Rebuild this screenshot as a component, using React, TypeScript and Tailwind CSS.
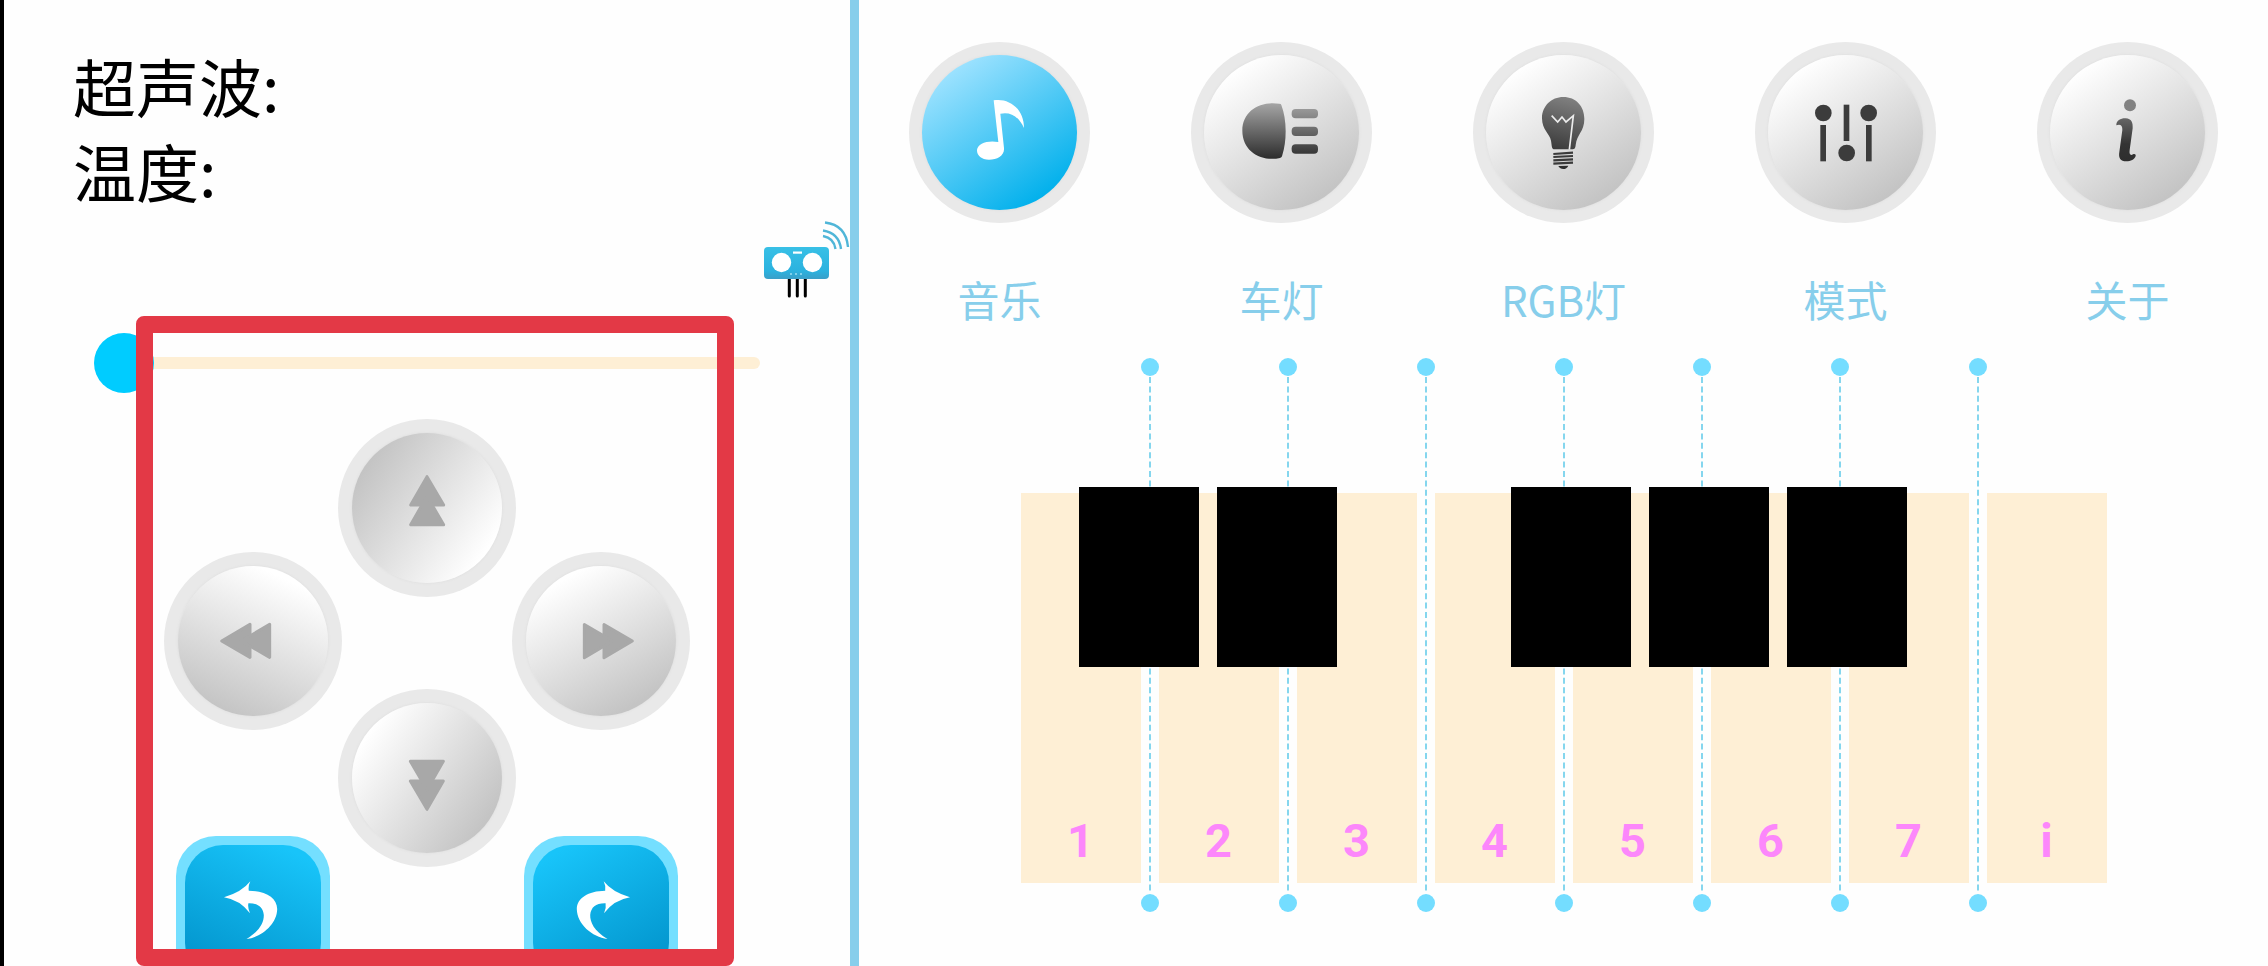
import { useState } from "react";
import type { ReactNode } from "react";

type Tab = { label: string; icon: ReactNode };

const tabs: Tab[] = [
  {
    label: "音乐",
    icon: (
      <svg viewBox="57 66 543 543" className="size-full" fill="#fff" aria-hidden="true">
        <path d="M311 241C352 233 402 262 402 324C386 290 362 274 331 281L342 384C344 406 322 419 297 419C274 419 260 405 261 390C263 371 292 360 325 366Z" />
      </svg>
    ),
  },
  {
    label: "车灯",
    icon: (
      <svg viewBox="906 66 543 543" className="size-full" aria-hidden="true">
        <defs>
          <linearGradient id="lamp" gradientUnits="userSpaceOnUse" x1="0" y1="249" x2="0" y2="417">
            <stop offset="0" stopColor="#a6a6a6" />
            <stop offset="1" stopColor="#2c2c2c" />
          </linearGradient>
        </defs>
        <g fill="url(#lamp)">
          <path d="M1171 251Q1176 251 1177 255Q1190 290 1190 334Q1190 375 1179 409Q1178 413 1173 414C1118 426 1060 395 1060 332C1060 272 1114 242 1171 251Z" />
          <rect x="1208" y="267" width="79" height="28" rx="12" />
          <rect x="1208" y="320" width="79" height="28" rx="12" />
          <rect x="1208" y="373" width="79" height="28" rx="12" />
        </g>
      </svg>
    ),
  },
  {
    label: "RGB灯",
    icon: (
      <svg viewBox="63 66 543 543" className="size-full" aria-hidden="true">
        <defs>
          <linearGradient id="bulb" x1="0.6" y1="0" x2="0.4" y2="1">
            <stop offset="0" stopColor="#808080" />
            <stop offset="1" stopColor="#3c3c3c" />
          </linearGradient>
        </defs>
        <path
          fill="url(#bulb)"
          d="M334 231C372 231 397 258 397 297C397 335 375 342 371 375C370 385 368 388 360 388H308C298 388 300 378 297 362C294 342 270 330 270 295C270 258 298 231 334 231Z"
        />
        <path d="M299 287L317 306L330 291L342 306L364 287L352 389" fill="none" stroke="#ececec" strokeWidth="5" />
        <path d="M304 402L363 398M304 411L363 408M304 421L363 418M304 431L363 428" stroke="#3a3a3a" strokeWidth="6.500" />
        <path d="M319 438L349 437Q344 447 334 447Q324 447 319 438Z" fill="#2c2c2c" />
      </svg>
    ),
  },
  {
    label: "模式",
    icon: (
      <svg viewBox="921 66 543 543" className="size-full" fill="#3c3c3c" aria-hidden="true">
        <circle cx="1126" cy="279" r="25" />
        <rect x="1117" y="315" width="17" height="109" />
        <rect x="1187" y="254" width="17" height="109" />
        <circle cx="1196" cy="399" r="25" />
        <circle cx="1262" cy="279" r="25" />
        <rect x="1254" y="315" width="17" height="109" />
      </svg>
    ),
  },
  {
    label: "关于",
    icon: (
      <svg viewBox="264 66 543 543" className="size-full" aria-hidden="true">
        <defs>
          <linearGradient id="info" x1="0" y1="0" x2="0" y2="1">
            <stop offset="0" stopColor="#666" />
            <stop offset="0.6" stopColor="#333" />
            <stop offset="1" stopColor="#2e2e2e" />
          </linearGradient>
        </defs>
        <circle cx="543" cy="256" r="18" fill="#828282" />
        <path
          fill="url(#info)"
          d="M502 316C501 302 517 294 530 295C548 296 552 308 551 325L542 390C540 404 545 407 552 403C557 400 561 403 560 408C557 418 545 424 532 424C514 424 508 414 511 396L520 330C521 316 513 311 502 316Z"
        />
      </svg>
    ),
  },
];

const notes = ["1", "2", "3", "4", "5", "6", "7", "i"];

// Black key that sits on the string to the right of each white key.
const sharps: (string | null)[] = ["-left-[62px]", "-left-[62px]", null, "-left-[44px]", "-left-[44px]", "-left-[44px]", null];

function PadButton({ name, face, turn }: { name: string; face: string; turn: string }) {
  return (
    <button type="button" aria-label={name} className="size-[178px] shrink-0 rounded-full bg-[#e9e9e9] p-[14px]">
      <span className={`block size-full rounded-full shadow-[0_0_3px_#dcdcdc] ${face}`}>
        <svg viewBox="42 42 450 450" className={`size-full ${turn}`} fill="#a8a8a8" stroke="#a8a8a8" strokeWidth="9" strokeLinejoin="round" aria-hidden="true">
          <path d="M267 173L218 258H317Z" />
          <path d="M267 232L218 317H317Z" />
        </svg>
      </span>
    </button>
  );
}

function TurnButton({ name, face, flip }: { name: string; face: string; flip: string }) {
  return (
    <button type="button" aria-label={name} className="size-[154px] shrink-0 rounded-[40px] bg-[#74dfff] p-[9px]">
      <span className={`block size-full rounded-[38px] ${face}`}>
        <svg viewBox="9 9 136 136" className={`size-full ${flip}`} fill="#fff" aria-hidden="true">
          <path d="M48 61.300Q66 56 74.300 45.300Q72 50 72.800 54.700C90 55 101 62 101.200 73C101 88 86 101 70.500 103C84 95 88 86 87.800 79C87 71 82 67 72.400 67.300Q71.500 72 74 77.300Q64 64 48 61.300Z" />
        </svg>
      </span>
    </button>
  );
}

function SensorIcon() {
  return (
    <svg viewBox="760 217 90 82" className="h-[82px] w-[90px] shrink-0 self-end" role="img" aria-label="超声波传感器">
      <defs>
        <linearGradient id="sensor" x1="0" y1="0" x2="0" y2="1">
          <stop offset="0" stopColor="#38c0e6" />
          <stop offset="0.750" stopColor="#2bb2df" />
          <stop offset="1" stopColor="#3a9fc8" />
        </linearGradient>
      </defs>
      <path d="M789.300 278V296M797.300 278V296M805.300 278V296" stroke="#000" strokeWidth="3" strokeLinecap="round" />
      <rect x="764" y="247" width="65" height="32" rx="4" fill="url(#sensor)" />
      <circle cx="781.500" cy="262.500" r="9.700" fill="#fff" />
      <circle cx="812.500" cy="262.500" r="9.700" fill="#fff" />
      <rect x="793" y="251.500" width="9" height="2.200" fill="#fff" />
      <path d="M790 274H805" stroke="#7fd0ea" strokeWidth="2" strokeDasharray="2 3" />
      <g fill="none" stroke="#50b6d8" strokeWidth="2.400">
        <path d="M825 222.500Q846 225 848 247" />
        <path d="M823 230.500Q839 233 841 249" />
        <path d="M823 236Q834 238 835.500 249" />
      </g>
    </svg>
  );
}

function StringLine({ sharp }: { sharp: string | null }) {
  return (
    <div className="relative flex w-[18px] shrink-0 flex-col items-center">
      <span className="size-[18px] rounded-full bg-[#74ddff]" />
      <svg viewBox="0 0 2 518" preserveAspectRatio="none" className="w-[2px] flex-1" aria-hidden="true">
        <path d="M1 1V517" stroke="#85d6ee" strokeWidth="2" strokeDasharray="6 3.400" />
      </svg>
      <span className="size-[18px] rounded-full bg-[#74ddff]" />
      {sharp && <button type="button" aria-label="黑键" className={`absolute top-[129px] z-10 h-[180px] w-[120px] bg-black ${sharp}`} />}
    </div>
  );
}

export default function App() {
  const [active, setActive] = useState("音乐");
  const [speed, setSpeed] = useState(0);

  return (
    <div className="grid h-screen grid-cols-[859fr_1409fr] overflow-hidden bg-[#fefefe] font-['Noto_Sans_CJK_SC',sans-serif]">
      <aside className="relative flex flex-col overflow-hidden border-r-[9px] border-l-4 border-r-[#87ceeb] border-l-black pt-[42px]">
        <div className="mb-[5px] shrink-0 px-[69px] text-[63px] leading-[85px] text-black">
          <p>超声波:</p>
          <p>温度:</p>
        </div>

        <SensorIcon />

        <div className="mt-[34px] shrink-0 px-[90px]">
          <input
            type="range"
            min={0}
            max={100}
            value={speed}
            onChange={(e) => setSpeed(Number(e.target.value))}
            aria-label="速度"
            className="block h-[60px] w-full appearance-none bg-transparent [&::-webkit-slider-runnable-track]:h-[12px] [&::-webkit-slider-runnable-track]:rounded-full [&::-webkit-slider-runnable-track]:bg-[#feefd5] [&::-webkit-slider-thumb]:-mt-[24px] [&::-webkit-slider-thumb]:size-[60px] [&::-webkit-slider-thumb]:appearance-none [&::-webkit-slider-thumb]:rounded-full [&::-webkit-slider-thumb]:bg-[#00ccff]"
          />
        </div>

        <div className="mt-[26px] flex shrink-0 flex-col items-center">
          <PadButton name="前进" face="bg-[linear-gradient(125deg,#c4c4c4_15%,#fff_85%)]" turn="rotate-0" />
          <div className="-mt-[45px] flex gap-[170px]">
            <PadButton name="左移" face="bg-[linear-gradient(205deg,#fff_15%,#c4c4c4_88%)]" turn="-rotate-90" />
            <PadButton name="右移" face="bg-[linear-gradient(150deg,#fff_15%,#c4c4c4_85%)]" turn="rotate-90" />
          </div>
          <div className="-mt-[41px]">
            <PadButton name="后退" face="bg-[linear-gradient(125deg,#fff_15%,#c4c4c4_85%)]" turn="rotate-180" />
          </div>
          <div className="-mt-[31px] flex gap-[194px]">
            <TurnButton name="左转" face="bg-[linear-gradient(205deg,#18c4f9_10%,#0294cc_90%)]" flip="" />
            <TurnButton name="右转" face="bg-[linear-gradient(150deg,#18c4f9_10%,#0294cc_90%)]" flip="-scale-x-100" />
          </div>
        </div>

        <div className="pointer-events-none absolute top-[316px] right-[116px] bottom-0 left-[132px] rounded-lg border-[17px] border-[#e33946]" />
      </aside>

      <main className="flex flex-col px-[50px] pt-[42px]">
        <nav className="flex justify-between">
          {tabs.map((tab) => (
            <button
              key={tab.label}
              type="button"
              onClick={() => setActive(tab.label)}
              className="flex w-[181px] flex-col items-center text-[42px] leading-[60px] text-[#87ceeb]"
            >
              <span className="grid size-[181px] place-items-center rounded-full bg-[#e9e9e9] p-[13px]">
                <span
                  className={`col-start-1 row-start-1 size-full rounded-full shadow-[0_0_3px_#dcdcdc] ${
                    active === tab.label
                      ? "bg-[linear-gradient(145deg,#a0e3ff_12%,#04b1ec_85%)]"
                      : "bg-[linear-gradient(145deg,#fff_14%,#c4c4c4_85%)]"
                  }`}
                />
                <span className="z-10 col-start-1 row-start-1 -m-[13px] size-[181px]">{tab.icon}</span>
              </span>
              <span className="mt-[46px] whitespace-nowrap">{tab.label}</span>
            </button>
          ))}
        </nav>

        <div className="mt-[29px] flex justify-center">
          {notes.map((note, i) => (
            <div key={note} className="flex h-[554px]">
              <button
                type="button"
                className="mt-[135px] flex h-[390px] w-[120px] shrink-0 items-end justify-center bg-[#feefd5] pb-[15px] font-['Roboto',sans-serif] text-[47px] leading-[54px] font-bold text-[#fc87fb]"
              >
                {note}
              </button>
              {i < sharps.length && <StringLine sharp={sharps[i]} />}
            </div>
          ))}
        </div>
      </main>
    </div>
  );
}
